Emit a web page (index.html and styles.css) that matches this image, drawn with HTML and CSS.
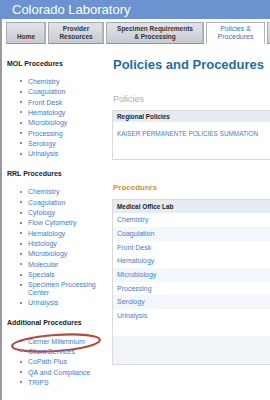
FILE: index.html
```html
<!DOCTYPE html>
<html lang="en">
<head>
    <meta charset="UTF-8">
    <meta name="viewport" content="width=device-width, initial-scale=1.0">
    <title>Colorado Laboratory - Policies and Procedures</title>
    <link rel="stylesheet" href="styles.css">
</head>
<body>
    <div class="masthead">Colorado Laboratory</div>

    <div class="page">
        <div class="tabs">
            <a class="tab tab-home" href="#">Home</a>
            <a class="tab tab-provider" href="#">Provider<br>Resources</a>
            <a class="tab tab-specimen" href="#">Specimen Requirements<br>&amp; Processing</a>
            <a class="tab tab-policies active" href="#">Policies &amp;<br>Procedures</a>
            <a class="tab tab-more" href="#"></a>
        </div>

        <div class="layout">
            <div class="side">
                <h3>MOL Procedures</h3>
                <ul>
                    <li><a href="#">Chemistry</a></li>
                    <li><a href="#">Coagulation</a></li>
                    <li><a href="#">Front Desk</a></li>
                    <li><a href="#">Hematology</a></li>
                    <li><a href="#">Microbiology</a></li>
                    <li><a href="#">Processing</a></li>
                    <li><a href="#">Serology</a></li>
                    <li><a href="#">Urinalysis</a></li>
                </ul>

                <h3>RRL Procedures</h3>
                <ul>
                    <li><a href="#">Chemistry</a></li>
                    <li><a href="#">Coagulation</a></li>
                    <li><a href="#">Cytology</a></li>
                    <li><a href="#">Flow Cytometry</a></li>
                    <li><a href="#">Hematology</a></li>
                    <li><a href="#">Histology</a></li>
                    <li><a href="#">Microbiology</a></li>
                    <li><a href="#">Molecular</a></li>
                    <li><a href="#">Specials</a></li>
                    <li><a href="#">Specimen Processing Center</a></li>
                    <li><a href="#">Urinalysis</a></li>
                </ul>

                <h3>Additional Procedures</h3>
                <ul>
                    <li class="circled">
                        <a href="#">Cerner Millennium</a>
                        <svg class="ring" width="92" height="22" viewBox="0 0 92 22">
                            <ellipse cx="46" cy="11" rx="44" ry="8" transform="rotate(-4 46 11)" fill="none" stroke="#b8483b" stroke-width="2.2"/>
                        </svg>
                    </li>
                    <li><a href="#">Client Services</a></li>
                    <li><a href="#">CoPath Plus</a></li>
                    <li><a href="#">QA and Compliance</a></li>
                    <li><a href="#">TRIPS</a></li>
                </ul>
            </div>

            <div class="content">
                <h1>Policies and Procedures</h1>

                <h2 class="label-gray">Policies</h2>
                <div class="box">
                    <div class="box-head">Regional Policies</div>
                    <div class="box-body">
                        <a class="caps" href="#">KAISER PERMANENTE POLICIES SUMMATION</a>
                    </div>
                </div>

                <h2 class="label-orange">Procedures</h2>
                <div class="box">
                    <div class="box-head tall">Medical Office Lab</div>
                    <div class="row"><a href="#">Chemistry</a></div>
                    <div class="row alt"><a href="#">Coagulation</a></div>
                    <div class="row"><a href="#">Front Desk</a></div>
                    <div class="row"><a href="#">Hematology</a></div>
                    <div class="row alt"><a href="#">Microbiology</a></div>
                    <div class="row"><a href="#">Processing</a></div>
                    <div class="row alt"><a href="#">Serology</a></div>
                    <div class="row"><a href="#">Urinalysis</a></div>
                    <div class="row"></div>
                    <div class="box-foot"></div>
                </div>
            </div>
        </div>
    </div>
</body>
</html>
```

FILE: styles.css
```css
html, body { margin: 0; padding: 0; height: 100%; overflow: hidden; }
body { font-family: "Liberation Sans", Arial, sans-serif; background: white; color: #222; }
a { text-decoration: none; }

.masthead { height: 19px; line-height: 19px; background: #6c93cf; color: white; font-size: 13px; padding-left: 12px; white-space: nowrap; }

.page { border-left: 2px solid #9a9a9a; height: calc(100% - 19px); overflow: hidden; }

.tabs { display: flex; gap: 2px; padding: 3px 0 0 4px; height: 22px; white-space: nowrap; }
.tab { flex: none; display: flex; align-items: flex-end; justify-content: center; text-align: center; box-sizing: border-box; height: 22px; padding-bottom: 3px; font-size: 6.5px; line-height: 7.5px; font-weight: bold; color: #333; background: linear-gradient(#e0e3e9, #c7cbd2); border: 1px solid #a7abb2; border-bottom-color: #8f949b; box-shadow: inset -1px 0 0 #b3b7be; }
.tab-home { width: 40px; }
.tab-provider { width: 56px; }
.tab-specimen { width: 98px; }
.tab-policies { width: 59px; }
.tab-more { width: 60px; }
.tab.active { background: white; color: #2d74c6; font-weight: normal; font-size: 7px; border-color: #b4b4b4; border-bottom-color: white; box-shadow: none; }

.layout { display: flex; }

.side { flex: none; width: 95px; padding: 14.7px 0 0 5px; }
.side h3 { margin: 0; font-size: 7px; line-height: 10px; font-weight: bold; color: #222; }
.side ul { list-style: none; margin: 9.25px 0 11.5px; padding-left: 21px; }
.side li { position: relative; font-size: 7px; line-height: 7.5px; }
.side li + li { margin-top: 2.83px; }
.side li::before { content: ""; position: absolute; left: -8px; top: 2.5px; width: 2px; height: 2px; background: #8d8d8d; }
.side li a { color: #3b7dd6; }
.ring { position: absolute; left: -18px; top: -5.8px; pointer-events: none; }

.content { flex: none; width: 300px; padding: 13.4px 0 0 10px; }
.content h1 { margin: 0; padding-left: 1px; font-size: 13px; line-height: 16px; color: #1d6ea8; }
.content h2 { margin: 0; padding-left: 1px; line-height: 12px; }
.label-gray { margin-top: 19.9px !important; font-size: 9px; font-weight: normal; color: #a6acb4; }
.label-orange { margin-top: 22.4px !important; font-size: 8px; font-weight: bold; color: #e98a2d; }

.box { margin-top: 4.5px; border: 1px solid #dadada; }
.box-head { height: 11.7px; line-height: 11.7px; padding-left: 4px; background: #e7ecf2; font-size: 6.4px; font-weight: bold; color: #222; }
.box-head.tall { height: 13.3px; line-height: 13.3px; }
.box-body { padding: 3px 4px 18.6px; line-height: 12px; }
.caps { font-size: 6.4px; color: #3d7fd7; }

.row { height: 13.7px; line-height: 13.7px; padding-left: 4px; font-size: 7px; }
.row a { color: #3d7fd7; }
.row.alt { background: #f3f6fa; }
.box-foot { height: 27.7px; background: #f1f5f9; }
```
